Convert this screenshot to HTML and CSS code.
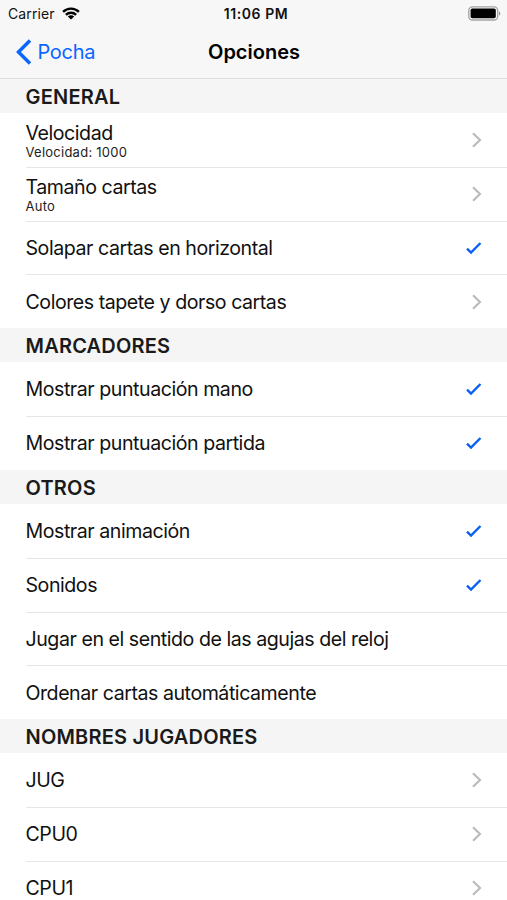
FILE: index.html
```html
<!DOCTYPE html>
<html lang="es">
<head>
<meta charset="utf-8">
<title>Opciones</title>
<link rel="stylesheet" href="styles.css">
</head>
<body>
<svg class="defs" aria-hidden="true">
  <symbol id="chevron" viewBox="0 0 12 18"><path d="M2 2.2 9 9 2 15.8" fill="none" stroke="#bcbcc0" stroke-width="2.2"/></symbol>
  <symbol id="check" viewBox="0 0 18 14"><path d="M2 7.6 6 11.5 15.5 2" fill="none" stroke="#0a60f5" stroke-width="2.4"/></symbol>
</svg>
<header class="top">
  <div class="status">
    <div class="carrier"><span class="carrier-name">Carrier</span>
      <svg class="wifi" viewBox="0 0 18 13"><g fill="none" stroke="#000" stroke-width="2.4"><path d="M1.1 4.8C5.4.5 12.6.5 16.9 4.8"/><path d="M3.9 7.8C6.7 5 11.3 5 14.1 7.8"/></g><path d="M5.8 9.4C7.6 7.8 10.4 7.8 12.2 9.4L9 12.6Z"/></svg>
    </div>
    <span class="time">11:06 PM</span>
    <svg class="battery" viewBox="0 0 33 15"><rect x=".8" y=".8" width="28.9" height="13.2" rx="3.6" fill="none" stroke="#a3a3a3" stroke-width="1.3"/><rect x="2.6" y="2.5" width="25.2" height="9.8" rx="1.8"/><path d="M31 5.4c1.6.5 1.6 3.6 0 4.1Z" fill="#8c8c8c"/></svg>
  </div>
  <nav class="nav">
    <a class="back"><svg class="back-icon" viewBox="0 0 16 26"><path d="M14 1.6 2.5 13 14 24.4" fill="none" stroke="#0a66ff" stroke-width="3.5"/></svg><span class="back-text">Pocha</span></a>
    <h1 class="title">Opciones</h1>
  </nav>
</header>
<main>
  <section>
    <h2 class="head"><span>GENERAL</span></h2>
    <div class="row"><div class="label"><span>Velocidad</span><small>Velocidad: 1000</small></div><svg class="chevron"><use href="#chevron"/></svg></div>
    <div class="row"><div class="label"><span>Tamaño cartas</span><small>Auto</small></div><svg class="chevron"><use href="#chevron"/></svg></div>
    <div class="row"><div class="label"><span>Solapar cartas en horizontal</span></div><svg class="check"><use href="#check"/></svg></div>
    <div class="row"><div class="label"><span>Colores tapete y dorso cartas</span></div><svg class="chevron"><use href="#chevron"/></svg></div>
  </section>
  <section>
    <h2 class="head"><span>MARCADORES</span></h2>
    <div class="row"><div class="label"><span>Mostrar puntuación mano</span></div><svg class="check"><use href="#check"/></svg></div>
    <div class="row"><div class="label"><span>Mostrar puntuación partida</span></div><svg class="check"><use href="#check"/></svg></div>
  </section>
  <section>
    <h2 class="head"><span>OTROS</span></h2>
    <div class="row"><div class="label"><span>Mostrar animación</span></div><svg class="check"><use href="#check"/></svg></div>
    <div class="row"><div class="label"><span>Sonidos</span></div><svg class="check"><use href="#check"/></svg></div>
    <div class="row"><div class="label"><span>Jugar en el sentido de las agujas del reloj</span></div></div>
    <div class="row"><div class="label"><span>Ordenar cartas automáticamente</span></div></div>
  </section>
  <section>
    <h2 class="head"><span>NOMBRES JUGADORES</span></h2>
    <div class="row"><div class="label"><span>JUG</span></div><svg class="chevron"><use href="#chevron"/></svg></div>
    <div class="row"><div class="label"><span>CPU0</span></div><svg class="chevron"><use href="#chevron"/></svg></div>
    <div class="row"><div class="label"><span>CPU1</span></div><svg class="chevron"><use href="#chevron"/></svg></div>
  </section>
</main>
</body>
</html>
```

FILE: styles.css
```css
* { box-sizing: border-box; }
html { height: 100%; overflow: hidden; }
body {
  margin: 0;
  height: 900px;
  overflow: hidden;
  background: #fff;
  color: #111;
  font-family: Inter, "Liberation Sans", sans-serif;
}
svg { display: block; flex: none; }
.defs { display: none; }
.top {
  height: 78.9px;
  background: #f7f7f7;
}
.status {
  display: grid;
  grid-template-columns: 1fr auto 1fr;
  align-items: center;
  height: 27px;
  padding: 0 6px 0 8px;
}
.carrier { display: flex; align-items: center; gap: 7px; font-size: 14px; letter-spacing: 0.1px; }
.wifi { width: 18px; height: 13px; }
.time { padding: 1px 0 0 3px; font-size: 14px; font-weight: 600; line-height: 26px; letter-spacing: 0.55px; }
.battery { width: 33px; height: 15px; justify-self: end; }
.nav {
  display: grid;
  grid-template-columns: 1fr auto 1fr;
  align-items: center;
  height: 51.9px;
  padding: 0 16px;
  border-bottom: 1px solid #dedede;
}
.back { display: flex; align-items: center; gap: 5.5px; color: #0a66ff; font-size: 20px; letter-spacing: -0.3px; }
.back-icon { width: 16px; height: 26px; }
.title { margin: 0; padding-left: 1px; font-size: 20px; font-weight: 600; letter-spacing: 0; color: #000; }
.head {
  display: flex;
  align-items: center;
  height: 34.25px;
  margin: 0;
  padding: 2px 0 0 25.5px;
  background: #f5f5f5;
  font-size: 20px;
  font-weight: 600;
  letter-spacing: 0.2px;
  color: #1a1a1a;
}
.row {
  display: flex;
  align-items: center;
  justify-content: space-between;
  height: 53.75px;
  margin-left: 25.5px;
  padding: 0 24px 0 0;
}
.row + .row { border-top: 1.5px solid #e6e6e6; padding-bottom: 0.5px; }
.label { display: flex; flex-direction: column; font-size: 19.6px; line-height: 24px; letter-spacing: -0.46px; }
.label small { font-size: 13px; line-height: 15px; letter-spacing: 0.25px; color: #222; }
.chevron { width: 12px; height: 18px; }
.check { width: 18px; height: 14px; }
```
